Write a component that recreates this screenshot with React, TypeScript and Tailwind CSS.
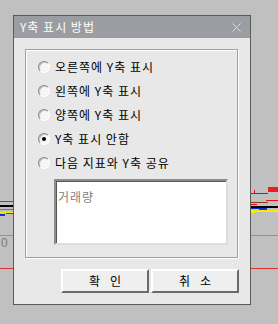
import React, { useState } from 'react';

const font = { fontFamily: '"Noto Sans CJK KR", "Noto Sans", sans-serif' };

const options = [
  '오른쪽에 Y축 표시',
  '왼쪽에 Y축 표시',
  '양쪽에 Y축 표시',
  'Y축 표시 안함',
  '다음 지표와 Y축 공유',
];

const ChartBackdrop = () => (
  <svg className="absolute inset-0" width={278} height={324} viewBox="0 0 278 324" shapeRendering="crispEdges">
    {/* left edge of the chart */}
    <rect x={0} y={201} width={14} height={1} fill="#8b4a1c" />
    <rect x={0} y={205} width={14} height={2} fill="#000" />
    <rect x={0} y={209} width={14} height={1} fill="#2e9e4a" />
    <rect x={0} y={212} width={14} height={1} fill="#f4f000" />
    <rect x={6} y={213} width={8} height={1} fill="#e01010" />
    <rect x={0} y={214} width={5} height={2} fill="#1030e0" />
    {/* right edge */}
    <rect x={268} y={187} width={10} height={5} fill="#ee1c1c" />
    <rect x={254} y={190} width={1} height={3} fill="#e01010" />
    <rect x={251} y={193} width={17} height={1} fill="#d01010" />
    <rect x={266} y={200} width={12} height={1} fill="#e01010" />
    <rect x={251} y={202} width={17} height={1} fill="#8b3a1a" />
    <rect x={251} y={204} width={6} height={1} fill="#e01010" />
    <rect x={251} y={206} width={27} height={2} fill="#000" />
    <rect x={251} y={208} width={8} height={1} fill="#1030e0" />
    <rect x={259} y={208} width={8} height={2} fill="#1030e0" />
    <rect x={251} y={210} width={27} height={2} fill="#f4f000" />
    <rect x={251} y={212} width={4} height={1} fill="#f4f000" />
    {/* axis lines */}
    <rect x={0} y={235} width={278} height={1} fill="#919191" />
    <rect x={0} y={268} width={278} height={1} fill="#e03030" />
    <text x={1} y={247} fontSize={12} fill="#7a7a7a" fontFamily="Liberation Sans, sans-serif">0</text>
  </svg>
);

const Radio = ({ checked }: { checked: boolean }) => (
  <span className="relative w-[12px] h-[12px] rounded-full bg-[#f6f6f6] border border-t-[#8a8a8a] border-l-[#8a8a8a] border-r-white border-b-white shadow-[inset_1px_1px_0_#c8c8c8] flex items-center justify-center shrink-0">
    {checked && <span className="w-[4px] h-[4px] rounded-full bg-black" />}
  </span>
);

const DlgButton = ({ a, b }: { a: string; b: string }) => (
  <button className="w-[88px] h-[24px] bg-[#efefef] border-2 border-t-white border-l-white border-r-[#6b6b6b] border-b-[#6b6b6b] text-[12px] text-black leading-none flex items-center justify-center gap-[10px]">
    <span>{a}</span>
    <span>{b}</span>
  </button>
);

export default function App() {
  const [selected, setSelected] = useState(3);

  return (
    <div className="relative w-[278px] h-[324px] bg-[#c0c0c0] overflow-hidden" style={font}>
      <ChartBackdrop />

      <div className="absolute left-[13px] top-[15px] w-[238px] h-[290px] border border-[#5b5b5b] bg-[#e8e8e8] flex flex-col">
        <div className="h-[22px] bg-[#9a9da1] flex items-center justify-between pl-[6px] pr-[9px]">
          <span className="text-white text-[12px] leading-none tracking-[1px]">Y축 표시 방법</span>
          <svg width="9" height="9" viewBox="0 0 9 9">
            <path d="M0.5 0.5 L8.5 8.5 M8.5 0.5 L0.5 8.5" stroke="#d6d8da" strokeWidth="1" />
          </svg>
        </div>

        <div className="flex-1 flex flex-col px-[11px] pt-[11px] pb-[11px]">
          <div className="h-[209px] mr-[1px] border border-[#a0a0a0] shadow-[inset_1px_1px_0_#fff,1px_1px_0_#fff] pt-[5px] pl-[12px] pr-[9px]">
            {options.map((label, i) => (
              <div
                key={label}
                onClick={() => setSelected(i)}
                className="h-[24px] flex items-center gap-[5px] cursor-default"
              >
                <Radio checked={selected === i} />
                <span className="text-[12px] text-black leading-none tracking-[1px]">{label}</span>
              </div>
            ))}
            <div className="ml-[16px] mt-[4px] h-[66px] bg-white border-2 border-t-[#8c8c8c] border-l-[#8c8c8c] border-r-[#dedede] border-b-[#dedede] shadow-[inset_1px_1px_0_#555] px-[2px] pt-[2px]">
              <span className="text-[12px] text-[#808080] leading-none tracking-[1px]">거래량</span>
            </div>
          </div>

          <div className="mt-auto flex justify-end gap-[2px]">
            <DlgButton a="확" b="인" />
            <DlgButton a="취" b="소" />
          </div>
        </div>
      </div>
    </div>
  );
}
